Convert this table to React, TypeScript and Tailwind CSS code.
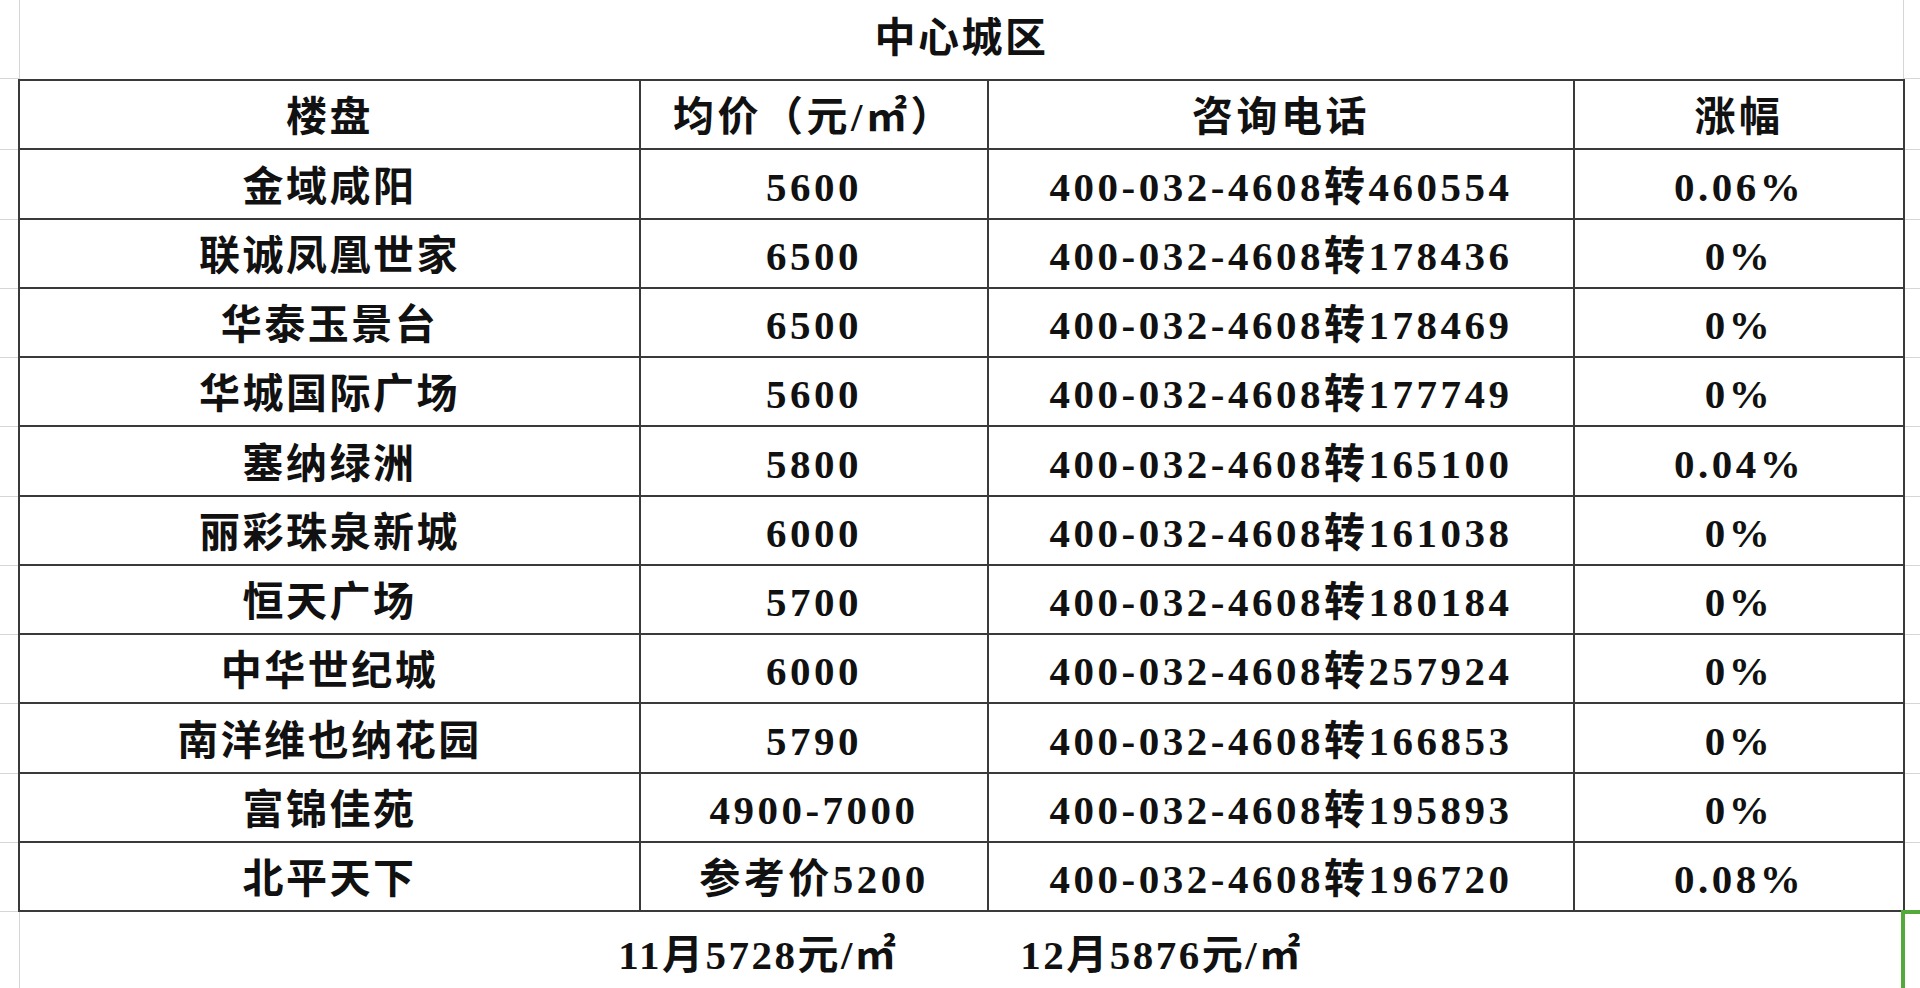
const rows = [
    { name: '金域咸阳', price: '5600', phone: '400-032-4608转460554', rise: '0.06%' },
    { name: '联诚凤凰世家', price: '6500', phone: '400-032-4608转178436', rise: '0%' },
    { name: '华泰玉景台', price: '6500', phone: '400-032-4608转178469', rise: '0%' },
    { name: '华城国际广场', price: '5600', phone: '400-032-4608转177749', rise: '0%' },
    { name: '塞纳绿洲', price: '5800', phone: '400-032-4608转165100', rise: '0.04%' },
    { name: '丽彩珠泉新城', price: '6000', phone: '400-032-4608转161038', rise: '0%' },
    { name: '恒天广场', price: '5700', phone: '400-032-4608转180184', rise: '0%' },
    { name: '中华世纪城', price: '6000', phone: '400-032-4608转257924', rise: '0%' },
    { name: '南洋维也纳花园', price: '5790', phone: '400-032-4608转166853', rise: '0%' },
    { name: '富锦佳苑', price: '4900-7000', phone: '400-032-4608转195893', rise: '0%' },
    { name: '北平天下', price: '参考价5200', phone: '400-032-4608转196720', rise: '0.08%' },
];

const cell = 'flex items-center justify-center pt-[7px] border-r-2 border-b-2 border-[#3a3a3a] whitespace-nowrap';

function Row({ cols }: { cols: string[] }) {
    return (
        <div className="flex h-[69.25px]">
            <div className="w-[18px] shrink-0 border-b border-[#d6d6d6]" />
            <div className={`${cell} w-[623px] border-l-2`}>{cols[0]}</div>
            <div className={`${cell} w-[348px] tracking-[3.5px]`}>{cols[1]}</div>
            <div className={`${cell} w-[586px] tracking-[3.5px]`}>{cols[2]}</div>
            <div className={`${cell} w-[330px] tracking-[3.5px]`}>{cols[3]}</div>
            <div className="flex-1 border-b border-[#d6d6d6]" />
        </div>
    );
}

export default function App() {
    return (
        <div className="w-[1920px] h-[988px] overflow-hidden bg-white text-[#111] font-bold text-[41px] tracking-[2.5px] font-['Liberation_Serif','Noto_Sans_CJK_SC',serif]">
            <div className="flex h-[79px]">
                <div className="w-[19px] shrink-0 border-b border-[#d6d6d6]" />
                <div className="w-[1885px] shrink-0 flex items-center justify-center border-l border-r border-[#d6d6d6] pb-[2px]">
                    中心城区
                </div>
                <div className="flex-1 border-b border-[#d6d6d6]" />
            </div>
            <div className="border-t-2 border-[#3a3a3a] ml-[18px] w-[1887px]" />
            <Row cols={['楼盘', '均价（元/㎡）', '咨询电话', '涨幅']} />
            {rows.map((r) => (
                <Row key={r.name} cols={[r.name, r.price, r.phone, r.rise]} />
            ))}
            <div className="flex h-[80px]">
                <div className="w-[19px] shrink-0" />
                <div className="w-[1882px] shrink-0 flex items-start justify-center gap-[122px] border-l border-[#d6d6d6] pt-[21px] leading-[1.1]">
                    <span>11月5728元/㎡</span>
                    <span>12月5876元/㎡</span>
                </div>
                <div className="flex-1 border-l-4 border-t-4 border-[#55a83a] -mt-[2px]" />
            </div>
        </div>
    );
}
